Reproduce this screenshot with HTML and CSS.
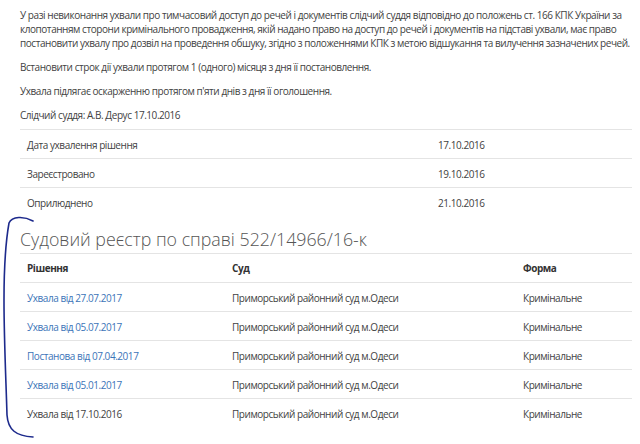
FILE: index.html
```html
<!DOCTYPE html>
<html lang="uk">

<head>
    <meta charset="UTF-8">
    <meta name="viewport" content="width=device-width, initial-scale=1.0">
    <title>Судовий реєстр по справі 522/14966/16-к</title>
    <link rel="stylesheet" href="styles.css">
</head>

<body>
    <main class="content">
        <!-- Decision text -->
        <p>У разі невиконання ухвали про тимчасовий доступ до речей і документів слідчий суддя відповідно до положень ст. 166 КПК України за клопотанням сторони кримінального провадження, якій надано право на доступ до речей і документів на підставі ухвали, має право постановити ухвалу про дозвіл на проведення обшуку, згідно з положеннями КПК з метою відшукання та вилучення зазначених речей.</p>
        <p>Встановити строк дії ухвали протягом 1 (одного) місяця з дня її постановлення.</p>
        <p>Ухвала підлягає оскарженню протягом п'яти днів з дня її оголошення.</p>
        <p class="signature">Слідчий суддя: А.В. Дерус 17.10.2016</p>

        <table class="info-table">
            <tbody>
                <tr>
                    <td>Дата ухвалення рішення</td>
                    <td>17.10.2016</td>
                </tr>
                <tr>
                    <td>Зареєстровано</td>
                    <td>19.10.2016</td>
                </tr>
                <tr>
                    <td>Оприлюднено</td>
                    <td>21.10.2016</td>
                </tr>
            </tbody>
        </table>

        <!-- Registry for the case -->
        <h2>Судовий реєстр по справі 522/14966/16-к</h2>
        <table class="registry-table">
            <thead>
                <tr>
                    <th>Рішення</th>
                    <th>Суд</th>
                    <th>Форма</th>
                </tr>
            </thead>
            <tbody>
                <tr>
                    <td><a href="#">Ухвала від 27.07.2017</a></td>
                    <td>Приморський районний суд м.Одеси</td>
                    <td>Кримінальне</td>
                </tr>
                <tr>
                    <td><a href="#">Ухвала від 05.07.2017</a></td>
                    <td>Приморський районний суд м.Одеси</td>
                    <td>Кримінальне</td>
                </tr>
                <tr>
                    <td><a href="#">Постанова від 07.04.2017</a></td>
                    <td>Приморський районний суд м.Одеси</td>
                    <td>Кримінальне</td>
                </tr>
                <tr>
                    <td><a href="#">Ухвала від 05.01.2017</a></td>
                    <td>Приморський районний суд м.Одеси</td>
                    <td>Кримінальне</td>
                </tr>
                <tr>
                    <td>Ухвала від 17.10.2016</td>
                    <td>Приморський районний суд м.Одеси</td>
                    <td>Кримінальне</td>
                </tr>
            </tbody>
        </table>
    </main>

    <!-- Pen mark drawn over the page -->
    <svg class="pen-mark" width="40" height="230" viewBox="0 214 40 230">
        <path d="M33 221 C 24 216, 12 216, 9 223 C 6 240, 4 270, 4 300 C 4 340, 6 380, 7 415 C 8 430, 16 436, 33 437" />
    </svg>
</body>

</html>
```

FILE: styles.css
```css
body {
    font-family: 'Open Sans', sans-serif;
    font-size: 10px;
    line-height: 14px;
    letter-spacing: -0.45px;
    color: #424242;
    margin: 0;
    padding: 0;
    background-color: #ffffff;
}

.content {
    position: relative;
    padding: 8px 8px 0 20px;
}

p {
    margin: 0 0 10px;
}

p.signature {
    margin-bottom: 7px;
}

/* Decision dates */
.info-table {
    width: 612px;
    border-collapse: collapse;
}

.info-table td {
    border-top: 1px solid #e4e4e4;
    padding: 8px 7px 6px;
    text-align: left;
}

.info-table td:first-child {
    width: 397px;
}

h2 {
    font-size: 17.8px;
    font-weight: 300;
    line-height: 26px;
    letter-spacing: 0;
    color: #555;
    margin: 10px 0 0;
    padding-bottom: 1px;
    width: 612px;
    border-bottom: 1px solid #e4e4e4;
}

/* Registry table */
.registry-table {
    width: 612px;
    border-collapse: collapse;
}

.registry-table th {
    font-weight: 700;
    color: #333;
    text-align: left;
    padding: 7px;
}

.registry-table td {
    border-top: 1px solid #e4e4e4;
    padding: 8px 7px 6px;
    text-align: left;
}

.registry-table th:first-child {
    width: 191px;
}

.registry-table th:nth-child(2) {
    width: 277px;
}

.registry-table a {
    color: #3c74b8;
    text-decoration: none;
}

.pen-mark {
    position: absolute;
    left: 0;
    top: 214px;
    fill: none;
    stroke: #1d2a8c;
    stroke-width: 1.6;
    stroke-linecap: round;
}
```
